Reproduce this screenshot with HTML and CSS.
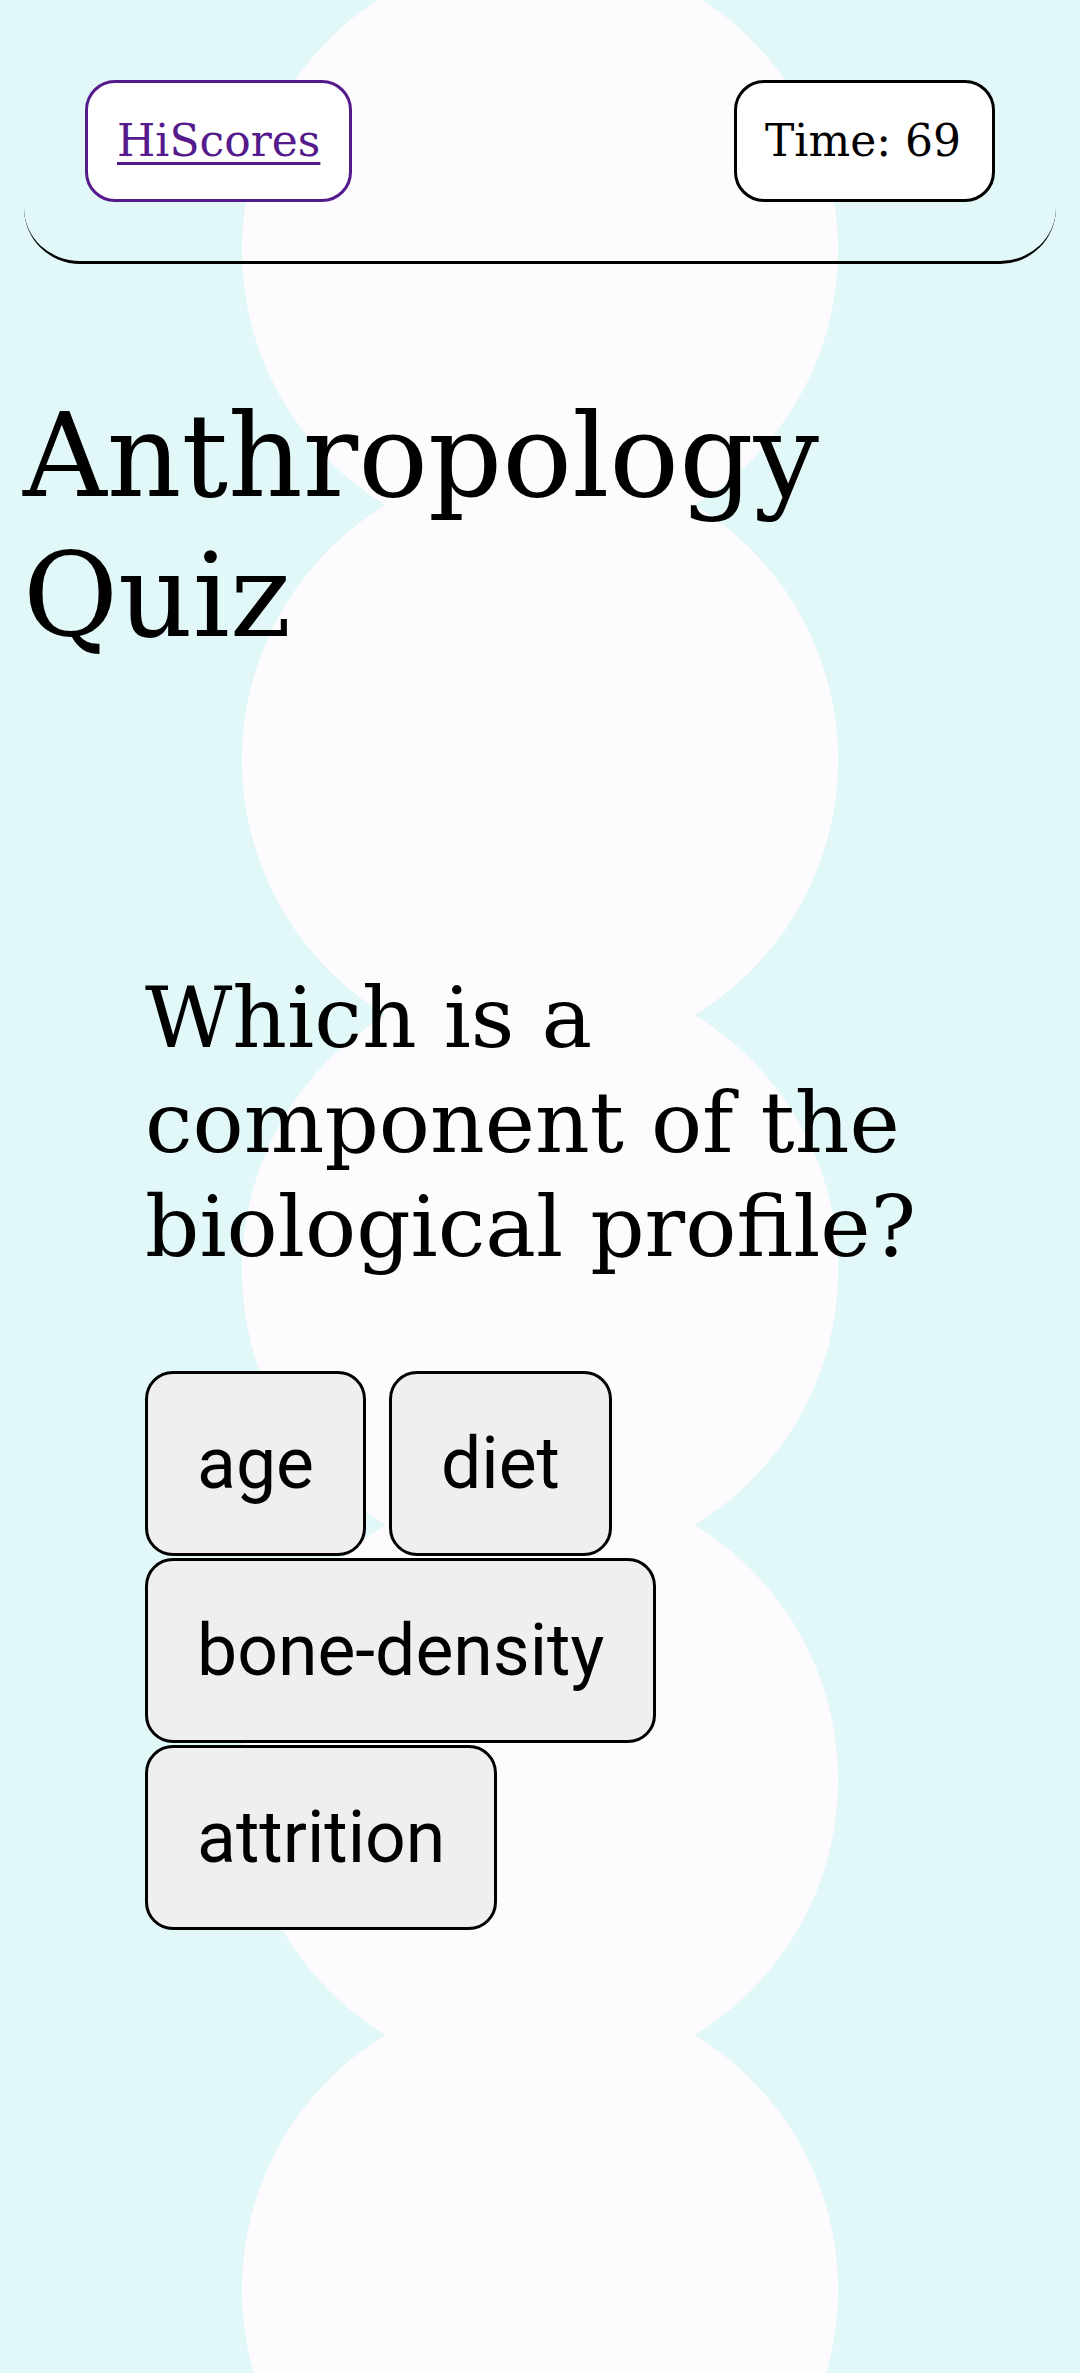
FILE: index.html
```html
<!DOCTYPE html>
<html lang="en">
<head>
<meta charset="utf-8">
<title>Anthropology Quiz</title>
<link rel="stylesheet" href="styles.css">
</head>
<body>
<header class="topbar">
  <a class="hiscores" href="#">HiScores</a>
  <div class="timer">Time: 69</div>
</header>
<h1 class="title">Anthropology Quiz</h1>
<main class="quiz">
  <h2 class="question">Which is a component of the biological profile?</h2>
  <div class="answers">
    <button class="answer">age</button>
    <button class="answer">diet</button>
    <button class="answer">bone-density</button>
    <button class="answer">attrition</button>
  </div>
</main>
</body>
</html>
```
FILE: styles.css
```css
html {
  background-color: #e2f7f8;
  background-image: radial-gradient(circle at 50% 50%, #fefbfe 297.5px, rgba(254, 251, 254, 0) 298.5px);
  background-size: 100% 510px;
  background-position: 0 -5px;
  background-repeat: repeat-y;
  min-height: 100%;
}

body {
  margin: 0;
  min-height: 2373px;
  font-family: "DejaVu Serif", serif;
  color: #000;
}

.topbar {
  margin: 0 24px;
  padding: 80px 61px 59px;
  display: flex;
  justify-content: space-between;
  align-items: center;
  border-bottom: 3px solid #000;
  border-radius: 0 0 56px 56px;
}

.hiscores,
.timer {
  display: inline-block;
  font-size: 44px;
  line-height: 116px;
  padding: 0 29px;
  border: 3px solid #000;
  border-radius: 30px;
  background: #fff;
}

.hiscores {
  color: #551a8b;
  border-color: #551a8b;
  text-decoration: underline;
  text-decoration-thickness: 3px;
  text-underline-offset: 6px;
}

.timer {
  padding: 0 31px 0 28px;
}

.title {
  margin: 122px 0 0;
  padding-left: 23px;
  font-size: 116px;
  line-height: 140px;
  font-weight: normal;
}

.quiz {
  margin-top: 300px;
  padding: 0 145px;
}

.question {
  margin: 0;
  font-size: 85px;
  line-height: 104.5px;
  font-weight: normal;
}

.answers {
  margin-top: 91px;
  display: flex;
  flex-wrap: wrap;
  gap: 2px 23px;
}

.answer {
  height: 185px;
  padding: 0 49px;
  font-family: Roboto, "Noto Sans", sans-serif;
  font-size: 71.5px;
  color: #000;
  background: #efefef;
  border: 3px solid #000;
  border-radius: 28px;
}
```
